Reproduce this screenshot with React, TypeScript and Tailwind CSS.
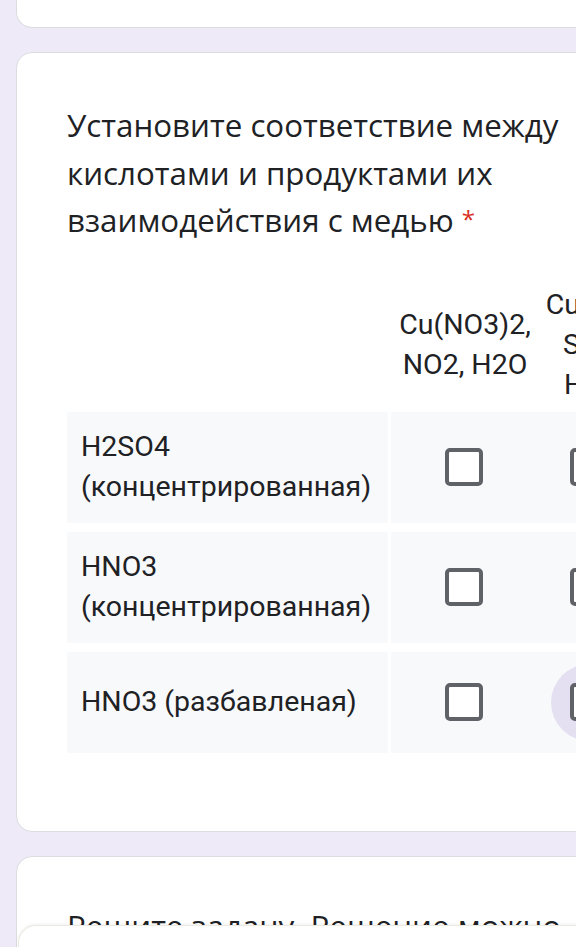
import React from "react";

const rows = [
  { label: ["H2SO4", "(концентрированная)"], h: "h-[111px]" },
  { label: ["HNO3", "(концентрированная)"], h: "h-[111px]" },
  { label: ["HNO3 (разбавленая)"], h: "h-[101px]" },
];

function Checkbox({ hover }: { hover?: boolean }) {
  return (
    <div className="relative flex items-center justify-center">
      {hover && <div className="absolute w-[77px] h-[77px] rounded-full bg-[#e4dff1]" />}
      <div className="relative w-[38px] h-[38px] rounded-[5px] border-[4px] border-[#5f6368] bg-white" />
    </div>
  );
}

export default function App() {
  return (
    <div
      className="relative h-[947px] w-[576px] overflow-hidden bg-[#eeeaf7] pl-4 text-[#202124]"
      style={{ fontFamily: "Roboto, 'Noto Sans', sans-serif" }}
    >
      {/* previous question, only its bottom edge shows */}
      <div className="h-[28px] w-[760px] rounded-b-[16px] border border-t-0 border-[#dadce0] bg-white" />

      {/* grid question */}
      <div className="mt-[24px] w-[760px] rounded-[16px] border border-[#dadce0] bg-white pl-[50px] pt-[49px] pb-[78px]">
        <h2 className="text-[31.3px] leading-[47.5px] pr-[196px]" style={{ fontFamily: "'Open Sans', sans-serif" }}>
          Установите соответствие между кислотами и продуктами их взаимодействия с медью{" "}
          <span className="relative -top-[4px] text-[24px] text-[#d93025]">*</span>
        </h2>

        <div className="mt-[38px] flex items-center h-[120px] text-[28.5px] leading-[40px]">
          <div className="w-[324px]" />
          <div className="w-[148px] text-center">Cu(NO3)2, NO2, H2O</div>
          <div className="w-[106px] text-center">CuSO4, SO2, H2O</div>
          <div className="w-[106px] text-center">Cu(NO3)2, NO, H2O</div>
        </div>

        <div className="mt-[7px] flex flex-col gap-[9px] text-[28.5px] leading-[40.5px]">
          {rows.map((r, i) => (
            <div key={i} className={`flex gap-[3px] ${r.h}`}>
              <div className="w-[321px] bg-[#f8f9fa] px-[14px] flex flex-col justify-center">
                {r.label.map((l) => (
                  <div key={l} className="whitespace-nowrap">{l}</div>
                ))}
              </div>
              <div className="flex flex-1 bg-[#f8f9fa]">
                <div className="w-[145px] flex items-center justify-center">
                  <Checkbox />
                </div>
                <div className="w-[106px] flex items-center justify-center">
                  <Checkbox hover={i === 2} />
                </div>
                <div className="w-[106px] flex items-center justify-center">
                  <Checkbox />
                </div>
              </div>
            </div>
          ))}
        </div>
      </div>

      {/* next question */}
      <div className="mt-[24px] w-[760px] h-[200px] rounded-[16px] border border-[#dadce0] bg-white pl-[50px] pt-[46px]">
        <p className="text-[31.3px] leading-[47.5px]" style={{ fontFamily: "'Open Sans', sans-serif" }}>
          Решите задачу. Решение можно
        </p>
      </div>

      {/* bottom sheet overlapping the page */}
      <div className="absolute left-[18px] top-[925px] w-[600px] h-[60px] rounded-tl-[18px] bg-white border-t border-l border-[#ece9e0] shadow-[0_-1px_3px_rgba(0,0,0,0.06)]" />
    </div>
  );
}
